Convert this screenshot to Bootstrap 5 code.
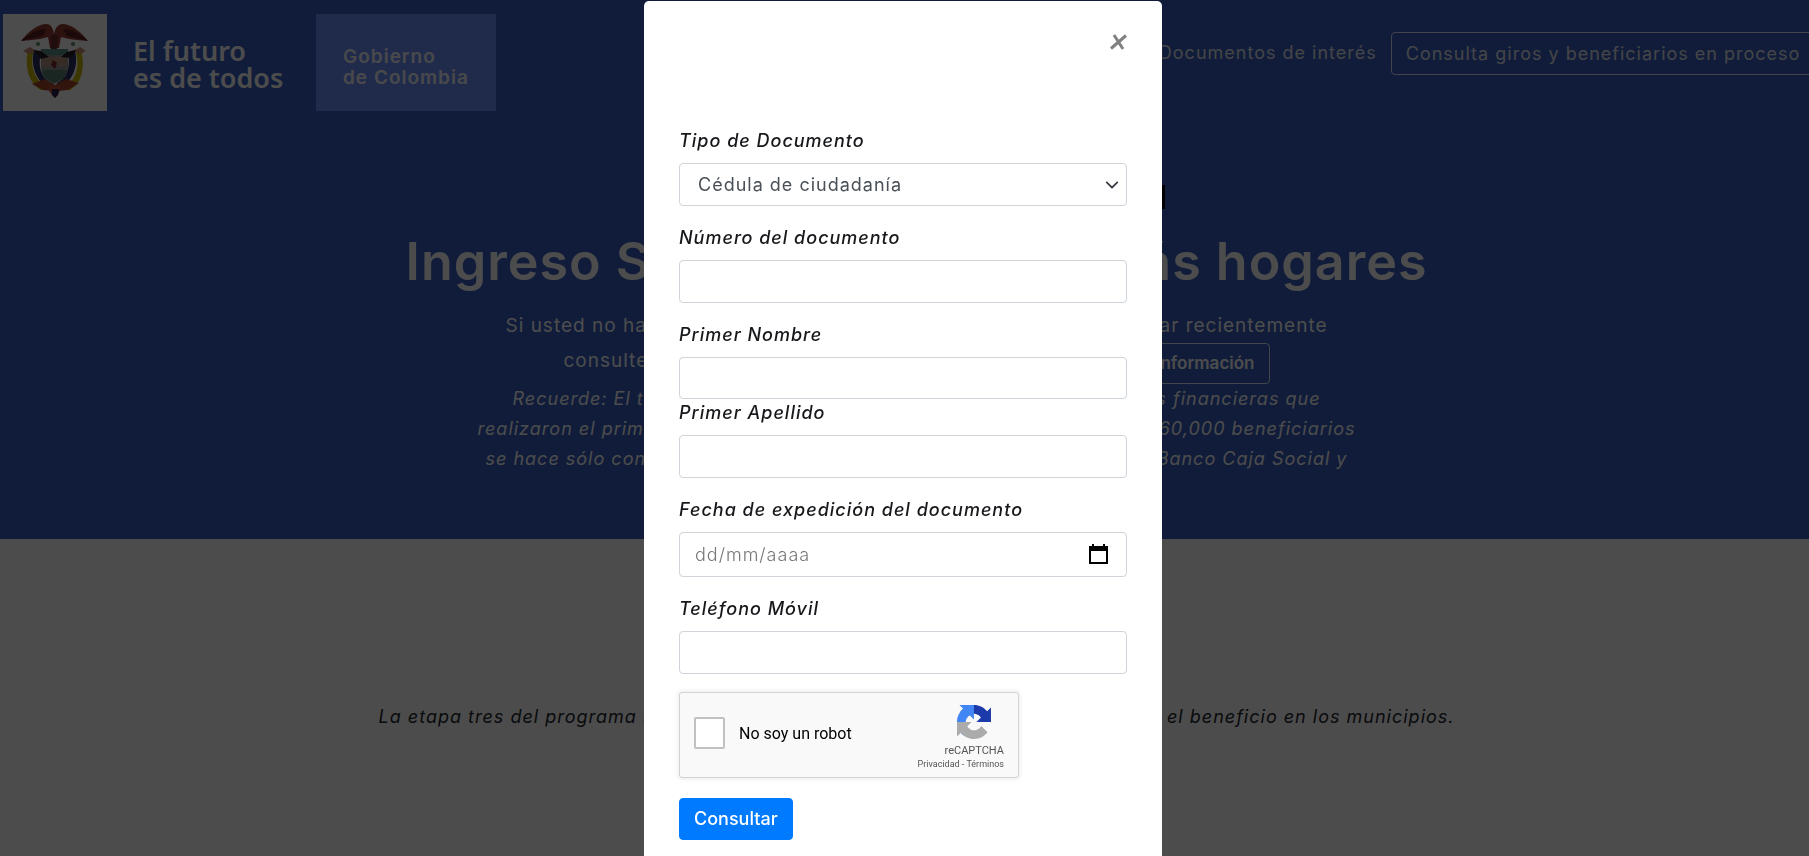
<!DOCTYPE html>
<html lang="es">
<head>
<meta charset="utf-8">
<meta name="viewport" content="width=device-width, initial-scale=1">
<title>Ingreso Solidario</title>
<link href="https://cdn.jsdelivr.net/npm/bootstrap@5.3.0/dist/css/bootstrap.min.css" rel="stylesheet">
<style>
  :root { --gov-blue: #365fc2; }
  body {
    font-family: Inter, "Open Sans", sans-serif;
    font-size: 18px;
    line-height: 27px;
    letter-spacing: 1px;
    background: #fff;
  }
  .modal-backdrop { --bs-backdrop-opacity: .7; width: 100%; height: 100%; }

  /* Header */
  .gov-hero { background: var(--gov-blue); color: #fff; padding-bottom: 65px; }
  .gov-header { padding: 14px 0 0 3px; }
  .gov-brands { width: 64%; }
  .gov-shield { width: 104px; height: 97px; background: #fff; }
  .gov-slogan { font: 600 27px/27px "Noto Sans", sans-serif; letter-spacing: 0; margin-left: 26px; padding-top: 23px; width: 183px; }
  .gov-box { width: 180px; height: 97px; padding: 32px 0 0 27px; background: #6e93fd; font: 600 19px/21px Inter, sans-serif; color: #fff; opacity: .95; }
  .gov-links { padding-top: 18px; }
  .gov-links a { color: #e4e8ee; text-decoration: none; white-space: nowrap; }
  .gov-links .gov-doc { padding-top: 7px; }
  .gov-outline { border: 1px solid #dfe6ff; border-radius: 4px; padding: 7px 14px; color: #fff; }
  .gov-links .gov-outline { margin-left: 14px; }

  /* Hero copy: centred lines */
  .hero-copy { padding-left: 24px; }
  .hero-row { width: 100%; white-space: nowrap; }
  .hero-tag { max-width: 496px; margin-top: 74px; background: #000; line-height: 24px; font-size: 19px; }
  .hero-title { max-width: 1022px; margin: 22px 0 15px; font-size: 52px; line-height: 62px; font-weight: 600; }
  .w-line-a { max-width: 822px; line-height: 35px; font-size: 19px; }
  .w-line-b { max-width: 706px; line-height: 35px; font-size: 19px; }
  .w-line-c { max-width: 808px; }
  .w-line-d { max-width: 878px; }
  .w-line-e { max-width: 862px; }
  .hero-em { font-style: italic; font-size: 18px; line-height: 30px; }
  .hero-btn { font-size: 17px; line-height: 25px; font-weight: 600; letter-spacing: 0; background: none; }
  .stage-copy { padding: 164px 0 0 24px; color: #212529; font-style: italic; }
  .stage-row { max-width: 1076px; }

  /* Dialog */
  .giro-modal { padding-right: 3px; }
  .giro-dialog { max-width: 518px; margin: 1px auto 0; }
  .giro-dialog .modal-content { border: 0; border-radius: 5px; padding: 0 35px 45px; color: #000; }
  .giro-head { height: 126px; }
  .giro-close { border: 0; background: none; padding: 0; margin: 30px 0 0; width: 17px; height: 22px; line-height: 0; }
  .giro-label { display: block; margin-bottom: 9px; font-style: italic; font-weight: 500; line-height: 27px; color: #16181b; }
  .giro-group { margin-bottom: 18px; }
  .giro-dialog .form-control, .giro-dialog .form-select {
    height: 43px; padding: 6px 15px; border: 1px solid #ced4da; border-radius: 4px;
    font-size: 18px; line-height: 27px; letter-spacing: 1px; color: #495057; background-color: #fff;
  }
  .giro-dialog .form-select { padding-left: 18px; background-position: right 7px center; background-size: 14px 14px; }
  .giro-dialog .giro-compact { height: 42px; }
  .giro-dialog .giro-date { height: 45px; }
  .giro-date::placeholder { color: #777; font-weight: 300; opacity: 1; }
  .giro-cal { top: 12px; right: 19px; pointer-events: none; }
  .captcha { width: 340px; height: 86px; padding: 0 14px; background: #f9f9f9; border: 1px solid #d3d3d3; border-radius: 3px; box-shadow: 0 0 4px 1px rgba(0,0,0,.08); font-family: Roboto, sans-serif; letter-spacing: 0; margin-bottom: 20px; }
  .captcha-main { padding-bottom: 4px; }
  .captcha .form-check-input { width: 31px; height: 32px; margin: 0; border: 2px solid #c1c1c1; border-radius: 2px; background-color: #fff; }
  .captcha-label { font-size: 16px; color: #000; margin-left: 14px; }
  .captcha-side { font-size: 11px; line-height: 14px; color: #555; padding-top: 12px; }
  .captcha-side small { font-size: 9px; line-height: 13px; }
  .captcha-side a { color: #555; text-decoration: none; }
  .captcha-logo { margin: 0 13px 5px 0; }
  .giro-submit { --bs-btn-bg: #007bff; --bs-btn-border-color: #007bff; border-radius: 4px; padding: 7px 14px; font-size: 18px; line-height: 26px; font-weight: 500; letter-spacing: 0; height: 42px; }
</style>
</head>
<body class="modal-open overflow-hidden">

<section class="gov-hero">
  <header class="gov-header d-flex align-items-start">
    <div class="gov-brands d-flex flex-shrink-0">
      <div class="gov-shield flex-shrink-0">
        <svg width="104" height="97" viewBox="0 0 104 97" role="img" aria-label="Escudo de Colombia">
          <path d="M25 36C22 50 24 68 38 76L67 76C80 69 82 50 78 36L72 35C78 52 73 69 59 73H46C32 68 26 53 31 35Z" fill="#c9b800"/>
          <path d="M31 36C27 53 34 68 46 73L50 69C37 64 35 52 38 38ZM72 36C76 53 69 68 57 73L54 69C64 64 68 52 65 38Z" fill="#2b2c62"/>
          <path d="M29 70l13-5 10 6 11-6 13 4-11 7-12 1-13-1z" fill="#a6482e"/>
          <path d="M38 35H65V52C65 62 60 67 51 70C42 67 38 62 38 52Z" fill="#8c9894"/>
          <path d="M38 35H65V41H38Z" fill="#5b8f8a"/>
          <path d="M39 43H64V52H39Z" fill="#b5947d"/><path d="M39 56H64L61 64 51 69 42 64Z" fill="#567f74"/>
          <path d="M50 46l4 3-2 6-4-4z" fill="#7d2626"/>
          <path d="M18 27C25 18 34 10 44 10C49 11 50 15 51 20C52 15 54 11 59 10C69 10 78 18 85 27L74 26 66 25 58 23 56 34H47L45 23 37 25 29 26Z" fill="#8f3c32"/>
          <path d="M18 27C26 20 33 15 43 15L40 22ZM60 15C70 15 78 20 85 27L64 22Z" fill="#5d211f"/>
          <path d="M48 21h7l-1 14h-6z" fill="#6b2c25"/>
          <path d="M20 37l7-4 6 4-7 3zM71 37l6-4 6 4-6 3z" fill="#c98f74"/>
          <path d="M30 36l8 1 8 6-8 2zM58 43l6-5 9-2-5 8z" fill="#251e24"/>
          <circle cx="35" cy="30" r="2" fill="#628a64"/><circle cx="70" cy="30" r="2" fill="#628a64"/>
          <path d="M46 72h11v5l-5 7-6-7z" fill="#c34b3b"/><path d="M49 75h7l-1 6-3 3-3-3z" fill="#25204b"/>
        </svg>
      </div>
      <div class="gov-slogan">El futuro<br>es de todos</div>
      <div class="gov-box text-nowrap">Gobierno<br>de Colombia</div>
    </div>
    <nav class="gov-links d-flex flex-nowrap">
      <a class="gov-doc" href="#">Documentos de interés</a>
      <a class="gov-outline" href="#">Consulta giros y beneficiarios en proceso</a>
    </nav>
  </header>

  <div class="hero-copy d-flex flex-column align-items-center">
    <div class="hero-row hero-tag text-end">Programa Ingreso Solidario.</div>
    <h1 class="hero-row hero-title d-flex justify-content-between"><span>Ingreso Solidario</span><span>más hogares</span></h1>
    <div class="hero-row w-line-a d-flex justify-content-between"><span>Si usted no ha sido</span><span>familiar recientemente</span></div>
    <div class="hero-row w-line-b d-flex justify-content-between"><span>consulte aquí</span><button type="button" class="gov-outline hero-btn">Más información</button></div>
    <div class="hero-row hero-em w-line-c d-flex justify-content-between"><span>Recuerde: El trámite</span><span>entidades financieras que</span></div>
    <div class="hero-row hero-em w-line-d d-flex justify-content-between"><span>realizaron el primer giro</span><span>360,000 beneficiarios</span></div>
    <div class="hero-row hero-em w-line-e d-flex justify-content-between"><span>se hace sólo con cita</span><span>Banco Caja Social y</span></div>
  </div>
</section>

<section class="stage-copy d-flex justify-content-center">
  <div class="hero-row stage-row d-flex justify-content-between"><span>La etapa tres del programa Ingreso</span><span>el beneficio en los municipios.</span></div>
</section>

<div class="modal-backdrop show"></div>
<div class="modal giro-modal show d-block overflow-hidden" role="dialog" aria-modal="true" aria-label="Consulta">
  <div class="modal-dialog giro-dialog">
    <form class="modal-content">
      <div class="giro-head d-flex justify-content-end">
        <button type="button" class="giro-close" aria-label="Cerrar">
          <svg width="17" height="16" viewBox="0 0 17 16" fill="none" stroke="#808080" stroke-width="3"><path d="M1 14.500 16 1.500M4 1l9 14"/></svg>
        </button>
      </div>
      <div class="giro-group">
        <label class="giro-label" for="tipo">Tipo de Documento</label>
        <select class="form-select" id="tipo"><option>Cédula de ciudadanía</option></select>
      </div>
      <div class="giro-group">
        <label class="giro-label" for="numero">Número del documento</label>
        <input class="form-control" id="numero" type="text">
      </div>
      <div>
        <label class="giro-label" for="nombre">Primer Nombre</label>
        <input class="form-control giro-compact" id="nombre" type="text">
      </div>
      <div class="giro-group">
        <label class="giro-label" for="apellido">Primer Apellido</label>
        <input class="form-control" id="apellido" type="text">
      </div>
      <div class="giro-group">
        <label class="giro-label" for="fecha">Fecha de expedición del documento</label>
        <div class="position-relative">
          <input class="form-control giro-date" id="fecha" type="text" placeholder="dd/mm/aaaa">
          <svg class="giro-cal position-absolute" width="19" height="20" viewBox="0 0 19 20" aria-hidden="true"><path d="M3 0h2v2h9V0h2v2h3v18H0V2h3zM2 7v11h15V7z" fill="#000" fill-rule="evenodd"/></svg>
        </div>
      </div>
      <div class="giro-group">
        <label class="giro-label" for="telefono">Teléfono Móvil</label>
        <input class="form-control" id="telefono" type="tel">
      </div>
      <div class="captcha d-flex justify-content-between">
        <div class="captcha-main d-flex align-items-center">
          <input class="form-check-input" type="checkbox" id="robot">
          <label class="captcha-label" for="robot">No soy un robot</label>
        </div>
        <div class="captcha-side d-flex flex-column align-items-end">
          <svg class="captcha-logo" width="34" height="34" viewBox="0 0 64 64" aria-hidden="true">
            <path fill="#1c3aa9" d="M64 31.955l-.033-1.37V4.687l-7.16 7.16C50.948 4.674 42.033.093 32.05.093c-10.4 0-19.622 4.96-25.458 12.64l11.736 11.86a15.55 15.55 0 0 1 4.754-5.334c2.05-1.6 4.952-2.906 8.968-2.906.485 0 .86.057 1.135.163 4.976.393 9.288 3.14 11.828 7.124l-8.307 8.307L64 31.953"/>
            <path fill="#4285f4" d="M31.862.094l-1.37.033H4.594l7.16 7.16C4.58 13.147 0 22.06 0 32.046c0 10.4 4.96 19.622 12.64 25.458L24.5 45.768a15.55 15.55 0 0 1-5.334-4.754c-1.6-2.05-2.906-4.952-2.906-8.968 0-.485.057-.86.163-1.135.393-4.976 3.14-9.288 7.124-11.828l8.307 8.307L31.86.095"/>
            <path fill="#ababab" d="M.001 32.045l.033 1.37v25.898l7.16-7.16c5.86 7.173 14.774 11.754 24.76 11.754 10.4 0 19.622-4.96 25.458-12.64l-11.736-11.86a15.55 15.55 0 0 1-4.754 5.334c-2.05 1.6-4.952 2.906-8.968 2.906-.485 0-.86-.057-1.135-.163-4.976-.393-9.288-3.14-11.828-7.124l8.307-8.307c-10.522.04-22.4.066-27.295-.005"/>
          </svg>
          <span>reCAPTCHA</span>
          <small class="text-nowrap"><a href="#">Privacidad</a> - <a href="#">Términos</a></small>
        </div>
      </div>
      <div><button type="submit" class="btn btn-primary giro-submit">Consultar</button></div>
    </form>
  </div>
</div>

<script src="https://cdn.jsdelivr.net/npm/bootstrap@5.3.0/dist/js/bootstrap.bundle.min.js"></script>
</body>
</html>
